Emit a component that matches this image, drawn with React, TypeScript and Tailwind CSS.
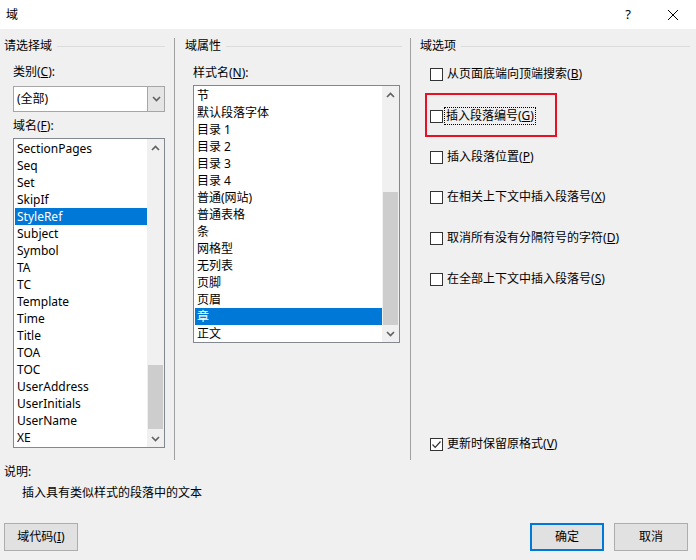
import React from "react"

const font = { fontFamily: '"Noto Sans", "Noto Sans CJK SC", sans-serif' }

const fieldNames = [
  "SectionPages", "Seq", "Set", "SkipIf", "StyleRef", "Subject", "Symbol", "TA", "TC",
  "Template", "Time", "Title", "TOA", "TOC", "UserAddress", "UserInitials", "UserName", "XE",
]

const styleNames = [
  "节", "默认段落字体", "目录 1", "目录 2", "目录 3", "目录 4", "普通(网站)", "普通表格",
  "条", "网格型", "无列表", "页脚", "页眉", "章", "正文",
]

function Chevron({ up }: { up?: boolean }) {
  return (
    <svg width="9" height="6" viewBox="0 0 9 6">
      <path d={up ? "M1 5 L4.5 1.5 L8 5" : "M1 1 L4.5 4.5 L8 1"} fill="none" stroke="#606060" strokeWidth="1.6" />
    </svg>
  )
}

function Scrollbar({ thumbTop, thumbH }: { thumbTop: number; thumbH: number }) {
  return (
    <div className="w-[17px] h-full bg-[#f0f0f0] flex flex-col">
      <div className="h-[17px] flex items-center justify-center"><Chevron up /></div>
      <div className="flex-1 flex flex-col">
        <div style={{ height: thumbTop }} />
        <div className="bg-[#cdcdcd] mx-[1px]" style={{ height: thumbH }} />
      </div>
      <div className="h-[17px] flex items-center justify-center"><Chevron /></div>
    </div>
  )
}

function ListBox({ items, selected, w, h, thumbTop, thumbH }: { items: string[]; selected: string; w: string; h: string; thumbTop: number; thumbH: number }) {
  return (
    <div className={`${w} ${h} border border-[#828790] bg-white flex`}>
      <div className="flex-1 pt-[1px] pl-[1px]">
        {items.map((it) => (
          <div key={it} className={`h-[17px] leading-[17px] pl-[2px] ${it === selected ? "bg-[#0078d7] text-white" : "text-black"}`}>{it}</div>
        ))}
      </div>
      <Scrollbar thumbTop={thumbTop} thumbH={thumbH} />
    </div>
  )
}

function Header({ text, pl, lineEnd }: { text: string; pl: string; lineEnd: string }) {
  return (
    <div className={`flex items-center h-[16px] ${pl} ${lineEnd}`}>
      <span className="leading-[16px]">{text}</span>
      <div className="flex-1 h-px bg-[#dcdcdc] ml-[5px]" />
    </div>
  )
}

function Check({ label, acc, checked, mt }: { label: string; acc: string; checked?: boolean; mt: string }) {
  return (
    <div className={`flex items-center h-[18px] ${mt} pl-[19px]`}>
      <div className="w-[13px] h-[13px] border border-[#333333] bg-white flex items-center justify-center">
        {checked && (
          <svg width="11" height="11" viewBox="0 0 11 11">
            <path d="M1.5 5.5 L4.2 8.3 L9.5 2.5" fill="none" stroke="#333333" strokeWidth="1.2" />
          </svg>
        )}
      </div>
      <span className="ml-[3px] leading-[16px] px-[1px]">
        {label}(<span className="underline">{acc}</span>)
      </span>
    </div>
  )
}

export default function App() {
  return (
    <div className="w-[696px] h-[560px] bg-[#f0f0f0] flex flex-col text-[12px] text-black" style={font}>
      <div className="h-[29px] bg-white flex items-center pl-[6px]">
        <span className="flex-1">域</span>
        <span className="text-[13px] mr-[36px]">?</span>
        <svg width="12" height="12" viewBox="0 0 12 12" className="mr-[17px]">
          <path d="M1 1 L11 11 M11 1 L1 11" stroke="#000" strokeWidth="1" />
        </svg>
      </div>

      <div className="flex h-[431px] pt-[9px]">
        <div className="w-[174px]">
          <Header text="请选择域" pl="pl-[4px]" lineEnd="pr-[9px]" />
          <div className="pl-[13px]">
            <div className="mt-[10px] leading-[16px]">类别(<span className="underline">C</span>):</div>
            <div className="mt-[6px] w-[152px] h-[26px] border border-[#a6a6a6] bg-white flex">
              <div className="flex-1 pl-[3px] leading-[24px]">(全部)</div>
              <div className="w-[17px] bg-[#e5e5e5] border-l border-[#a6a6a6] flex items-center justify-center">
                <Chevron />
              </div>
            </div>
            <div className="mt-[6px] leading-[16px]">域名(<span className="underline">F</span>):</div>
            <div className="mt-[4px]">
              <ListBox items={fieldNames} selected="StyleRef" w="w-[152px]" h="h-[310px]" thumbTop={209} thumbH={64} />
            </div>
          </div>
        </div>
        <div className="w-px bg-[#a0a0a0]" />

        <div className="w-[235px]">
          <Header text="域属性" pl="pl-[10px]" lineEnd="pr-[8px]" />
          <div className="pl-[18px]">
            <div className="mt-[11px] leading-[16px]">样式名(<span className="underline">N</span>):</div>
            <div className="mt-[4px]">
              <ListBox items={styleNames} selected="章" w="w-[207px]" h="h-[258px]" thumbTop={89} thumbH={133} />
            </div>
          </div>
        </div>
        <div className="w-px bg-[#a0a0a0]" />

        <div className="flex-1 flex flex-col">
          <Header text="域选项" pl="pl-[9px]" lineEnd="pr-[6px]" />
          <Check label="从页面底端向顶端搜索" acc="B" mt="mt-[11px]" />
          <div className="mt-[10px] ml-[14px] w-[132px] h-[44px] border-2 border-[#e81123] flex items-center pt-[2px]">
            <div className="flex items-center h-[18px] pl-[3px]">
              <div className="w-[13px] h-[13px] border border-[#333333] bg-white" />
              <span className="ml-[2px] leading-[16px] px-[1px] outline outline-1 outline-dotted outline-black">
                插入段落编号(<span className="underline">G</span>)
              </span>
            </div>
          </div>
          <Check label="插入段落位置" acc="P" mt="mt-[11px]" />
          <Check label="在相关上下文中插入段落号" acc="X" mt="mt-[22px]" />
          <Check label="取消所有没有分隔符号的字符" acc="D" mt="mt-[23px]" />
          <Check label="在全部上下文中插入段落号" acc="S" mt="mt-[23px]" />
          <div className="flex-1" />
          <Check label="更新时保留原格式" acc="V" checked mt="mt-0" />
          <div className="h-[7px]" />
        </div>
      </div>

      <div className="pl-[4px] mt-[4px] leading-[16px]">说明:</div>
      <div className="pl-[22px] mt-[5px] leading-[16px]">插入具有类似样式的段落中的文本</div>
      <div className="flex mt-[22px] px-[4px]">
        <button className="w-[74px] h-[28px] bg-[#e1e1e1] border border-[#adadad]">域代码(<span className="underline">I</span>)</button>
        <div className="flex-1" />
        <button className="w-[74px] h-[28px] bg-[#e1e1e1] border-2 border-[#0078d7]">确定</button>
        <button className="w-[74px] h-[28px] bg-[#e1e1e1] border border-[#adadad] ml-[10px] mr-[4px]">取消</button>
      </div>
    </div>
  )
}
